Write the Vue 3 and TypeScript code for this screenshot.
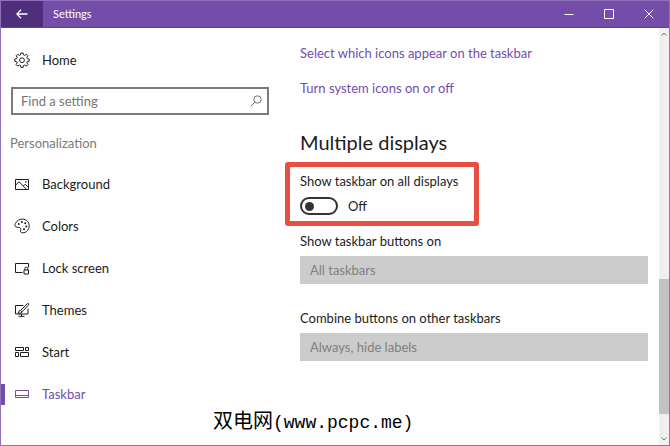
<script setup lang="ts">
import { computed, ref } from 'vue'

interface NavItem {
  id: string
  label: string
}

const navItems: NavItem[] = [
  { id: 'background', label: 'Background' },
  { id: 'colors', label: 'Colors' },
  { id: 'lock', label: 'Lock screen' },
  { id: 'themes', label: 'Themes' },
  { id: 'start', label: 'Start' },
  { id: 'taskbar', label: 'Taskbar' },
]

const current = ref('taskbar')
const query = ref('')
const showOnAll = ref(false)
const stateText = computed(() => (showOnAll.value ? 'On' : 'Off'))
</script>

<template>
  <div class="window">
    <header class="titlebar">
      <button class="back" type="button" aria-label="Back">
        <svg width="12" height="10" viewBox="0 0 12 10"><path d="M11.5 5H1M5 .8.8 5 5 9.2" /></svg>
      </button>
      <span class="title">Settings</span>
      <div class="controls">
        <button type="button" aria-label="Minimize">
          <svg width="10" height="10" viewBox="0 0 10 10"><path d="M.5 5.5h9" /></svg>
        </button>
        <button type="button" aria-label="Maximize">
          <svg width="10" height="10" viewBox="0 0 10 10"><path d="M.5.5h9v9h-9z" /></svg>
        </button>
        <button type="button" aria-label="Close">
          <svg width="10" height="10" viewBox="0 0 10 10"><path d="M.7.7l8.6 8.6M9.3.7.7 9.3" /></svg>
        </button>
      </div>
    </header>

    <div class="body">
      <aside class="sidebar">
        <a class="item home" href="#home">
          <svg class="icon" viewBox="0 0 16 16">
            <path d="M6.9 1h2.2l.4 1.9 1.2.5 1.7-1.1 1.5 1.5-1.1 1.7.5 1.2 1.9.4v2.2l-1.9.4-.5 1.2 1.1 1.7-1.5 1.5-1.7-1.1-1.2.5-.4 1.9H6.9l-.4-1.9-1.2-.5-1.7 1.1-1.5-1.5 1.1-1.7-.5-1.2L.8 9.3V7.1l1.9-.4.5-1.2-1.1-1.7 1.5-1.5 1.7 1.1 1.2-.5z" />
            <circle cx="8" cy="8.2" r="2.4" />
          </svg>
          <span>Home</span>
        </a>

        <div class="search">
          <input v-model="query" type="text" placeholder="Find a setting" aria-label="Find a setting" />
          <svg width="12" height="12" viewBox="0 0 12 12"><circle cx="7.5" cy="4.5" r="3.7" /><path d="M4.9 7.1.6 11.4" /></svg>
        </div>

        <h2 class="group">Personalization</h2>

        <nav class="nav">
          <a
            v-for="item in navItems"
            :key="item.id"
            class="item"
            :class="{ active: item.id === current }"
            :href="'#' + item.id"
            @click="current = item.id"
          >
            <svg class="icon" viewBox="0 0 16 16">
              <template v-if="item.id === 'background'">
                <path d="M1.5 3.5h13v10h-13zM1.5 9.3 5 5.8l7.5 7.5M9.3 10.1l1.9-1.9 3.3 3.3" />
                <circle class="dot" cx="11.8" cy="5.9" r=".8" />
              </template>
              <template v-else-if="item.id === 'colors'">
                <path d="M2.4 9.1C.6 8.6.5 7.1 1.5 5.4 3 2.5 5.6 1 8.6 1.1c3.7.1 6.6 2.9 6.6 6.7 0 3.9-2.9 7-6.4 7-1.9 0-2.7-1-2.2-2.5.4-1.2.1-2.4-.9-2.700-1.200-.4-1.700-.1-3.300-.5z" />
                <circle class="dot" cx="4.8" cy="6" r="1" />
                <circle class="dot" cx="7.9" cy="4" r="1" />
                <circle class="dot" cx="11.2" cy="5.2" r="1" />
                <circle class="dot" cx="12.3" cy="8.5" r="1" />
                <circle class="dot" cx="10" cy="11.3" r="1" />
              </template>
              <template v-else-if="item.id === 'lock'">
                <path d="M8.5 12.5h-7v-9h13v4M10 10h4.500v4H10zM10.900 10V8.500q0-1.300 1.400-1.300t1.400 1.300V10" />
              </template>
              <template v-else-if="item.id === 'themes'">
                <path d="M9.5 3.5h-8v8.500H14V6.500M7.500 12v2M4.500 14.300h6M6.500 8.500l6.700-6.600q1-.7 1.400-.2t-.2 1.400L8.200 9.800M8.200 9.800 6.500 8.500Q4.800 8.300 4.700 10L3.800 11.200q4 .5 4.400-1.400z" />
              </template>
              <template v-else-if="item.id === 'start'">
                <path d="M1.500 3.500h8v3h-8zM11.500 3.500h3v3h-3zM1.500 8.500h3v4h-3zM6.500 8.500h8v4h-8z" />
              </template>
              <template v-else>
                <path d="M1.500 4.500h13v7h-13zM1.500 9.500h13" />
              </template>
            </svg>
            <span>{{ item.label }}</span>
          </a>
        </nav>
      </aside>

      <main class="content">
        <a class="link" href="#icons">Select which icons appear on the taskbar</a>
        <a class="link" href="#system">Turn system icons on or off</a>

        <h1>Multiple displays</h1>

        <section class="highlight">
          <label for="all-displays">Show taskbar on all displays</label>
          <div class="toggle-row">
            <input id="all-displays" v-model="showOnAll" class="toggle" type="checkbox" role="switch" />
            <span>{{ stateText }}</span>
          </div>
        </section>

        <div class="field">
          <label for="buttons-on">Show taskbar buttons on</label>
          <select id="buttons-on" :disabled="!showOnAll">
            <option>All taskbars</option>
          </select>
        </div>

        <div class="field">
          <label for="combine">Combine buttons on other taskbars</label>
          <select id="combine" :disabled="!showOnAll">
            <option>Always, hide labels</option>
          </select>
        </div>
      </main>

      <div class="scrollbar" aria-hidden="true">
        <svg width="6" height="4" viewBox="0 0 6 4"><path d="M.5 3.5 3 1l2.500 2.500" /></svg>
        <div class="track"><div class="thumb"></div></div>
        <svg width="6" height="4" viewBox="0 0 6 4"><path d="M.5.5 3 3 5.5.5" /></svg>
      </div>
    </div>

    <p class="watermark"><span>双电网</span>(www.pcpc.me)</p>
  </div>
</template>

<style>
body {
  margin: 0;
}
</style>

<style scoped>
.window {
  position: relative;
  display: flex;
  flex-direction: column;
  box-sizing: border-box;
  min-height: 100vh;
  border: 1px solid #8e70bb;
  background: #fff;
  color: #1c1c1c;
  font: 13px/20px Lato, "Open Sans", sans-serif;
}

svg {
  fill: none;
  stroke: currentColor;
  flex: none;
}

button {
  display: flex;
  align-items: center;
  justify-content: center;
  padding: 0;
  border: 0;
  background: none;
  color: #fff;
}

a {
  color: inherit;
  text-decoration: none;
}

.titlebar {
  display: flex;
  height: 27px;
  box-sizing: border-box;
  border-bottom: 1px solid #653a9b;
  background: #744da9;
  color: #fff;
}

.back {
  width: 42px;
  background: #4f2f7b;
}

.back svg {
  stroke-width: 1.3;
}

.title {
  flex: 1;
  padding-left: 10px;
  font-size: 11px;
  line-height: 26px;
}

.controls {
  display: flex;
}

.controls button {
  width: 40px;
}

.body {
  flex: 1;
  display: flex;
}

.sidebar {
  flex: none;
  width: 284px;
}

.item {
  display: flex;
  align-items: center;
  gap: 12px;
  height: 42px;
  box-sizing: border-box;
  padding-left: 13px;
}

.home {
  margin-top: 11px;
}

.icon {
  width: 16px;
  height: 16px;
}

.dot {
  fill: currentColor;
  stroke: none;
}

.search {
  display: flex;
  align-items: center;
  height: 28px;
  box-sizing: border-box;
  margin: 6px 16px 0 10px;
  padding-right: 5px;
  border: 2px solid #7a7a7a;
  color: #6e6e6e;
}

.search input {
  flex: 1;
  min-width: 0;
  padding: 0 8px;
  border: 0;
  outline: 0;
  background: none;
  font: inherit;
  color: #1c1c1c;
}

.search input::placeholder {
  color: #767676;
  opacity: 1;
}

.group {
  margin: 18px 0 10px 9px;
  font-size: 13px;
  font-weight: 400;
  color: #7a7a7a;
}

.active {
  background: linear-gradient(#744da9, #744da9) left center / 4px 21px no-repeat;
  color: #744da9;
}

.content {
  flex: 1;
  min-width: 0;
  padding: 15px 11px 24px 15px;
}

.link {
  display: block;
  margin-bottom: 15px;
  color: #744da9;
}

h1 {
  margin: 30px 0 6px;
  font-size: 20px;
  font-weight: 400;
  line-height: 28px;
}

.highlight {
  width: fit-content;
  box-sizing: border-box;
  margin-left: -15px;
  padding: 4px 16px 5px 10px;
  border: 5px solid #e84f40;
  border-radius: 3px;
}

.highlight label,
.field label {
  display: block;
}

.toggle-row {
  display: flex;
  align-items: center;
  gap: 10px;
  margin-top: 5px;
}

.toggle {
  appearance: none;
  display: flex;
  align-items: center;
  width: 38px;
  height: 18px;
  box-sizing: border-box;
  margin: 0;
  padding: 0 3px;
  border: 2px solid #333;
  border-radius: 9px;
}

.toggle::before {
  content: "";
  width: 9px;
  height: 9px;
  border-radius: 50%;
  background: #333;
}

.toggle:checked {
  justify-content: flex-end;
  border-color: #744da9;
  background: #744da9;
}

.toggle:checked::before {
  background: #fff;
}

.field {
  margin: 5px 0 24px;
}

.field + .field {
  margin-bottom: 0;
}

.field select {
  appearance: none;
  display: block;
  width: 100%;
  height: 28px;
  margin-top: 5px;
  padding: 0 10px;
  border: 0;
  border-radius: 0;
  background: #ccc;
  font: inherit;
  color: #1c1c1c;
  opacity: 1;
}

.field select:disabled {
  color: #808080;
}

.scrollbar {
  display: flex;
  flex-direction: column;
  align-items: center;
  gap: 4px;
  width: 10px;
  box-sizing: border-box;
  padding: 4px 0;
  background: #f0f0f0;
  color: #777;
}

.track {
  flex: 1;
  display: flex;
  flex-direction: column;
  justify-content: flex-end;
  width: 100%;
  box-sizing: border-box;
  padding-bottom: 19px;
}

.thumb {
  height: 36%;
  background: #c2c2c2;
}

.watermark {
  position: absolute;
  left: 212px;
  bottom: 10px;
  margin: 0;
  color: #000;
  font: 18px/24px "Liberation Mono", "Noto Sans CJK SC", monospace;
}

.watermark span {
  font-size: 20px;
}
</style>
